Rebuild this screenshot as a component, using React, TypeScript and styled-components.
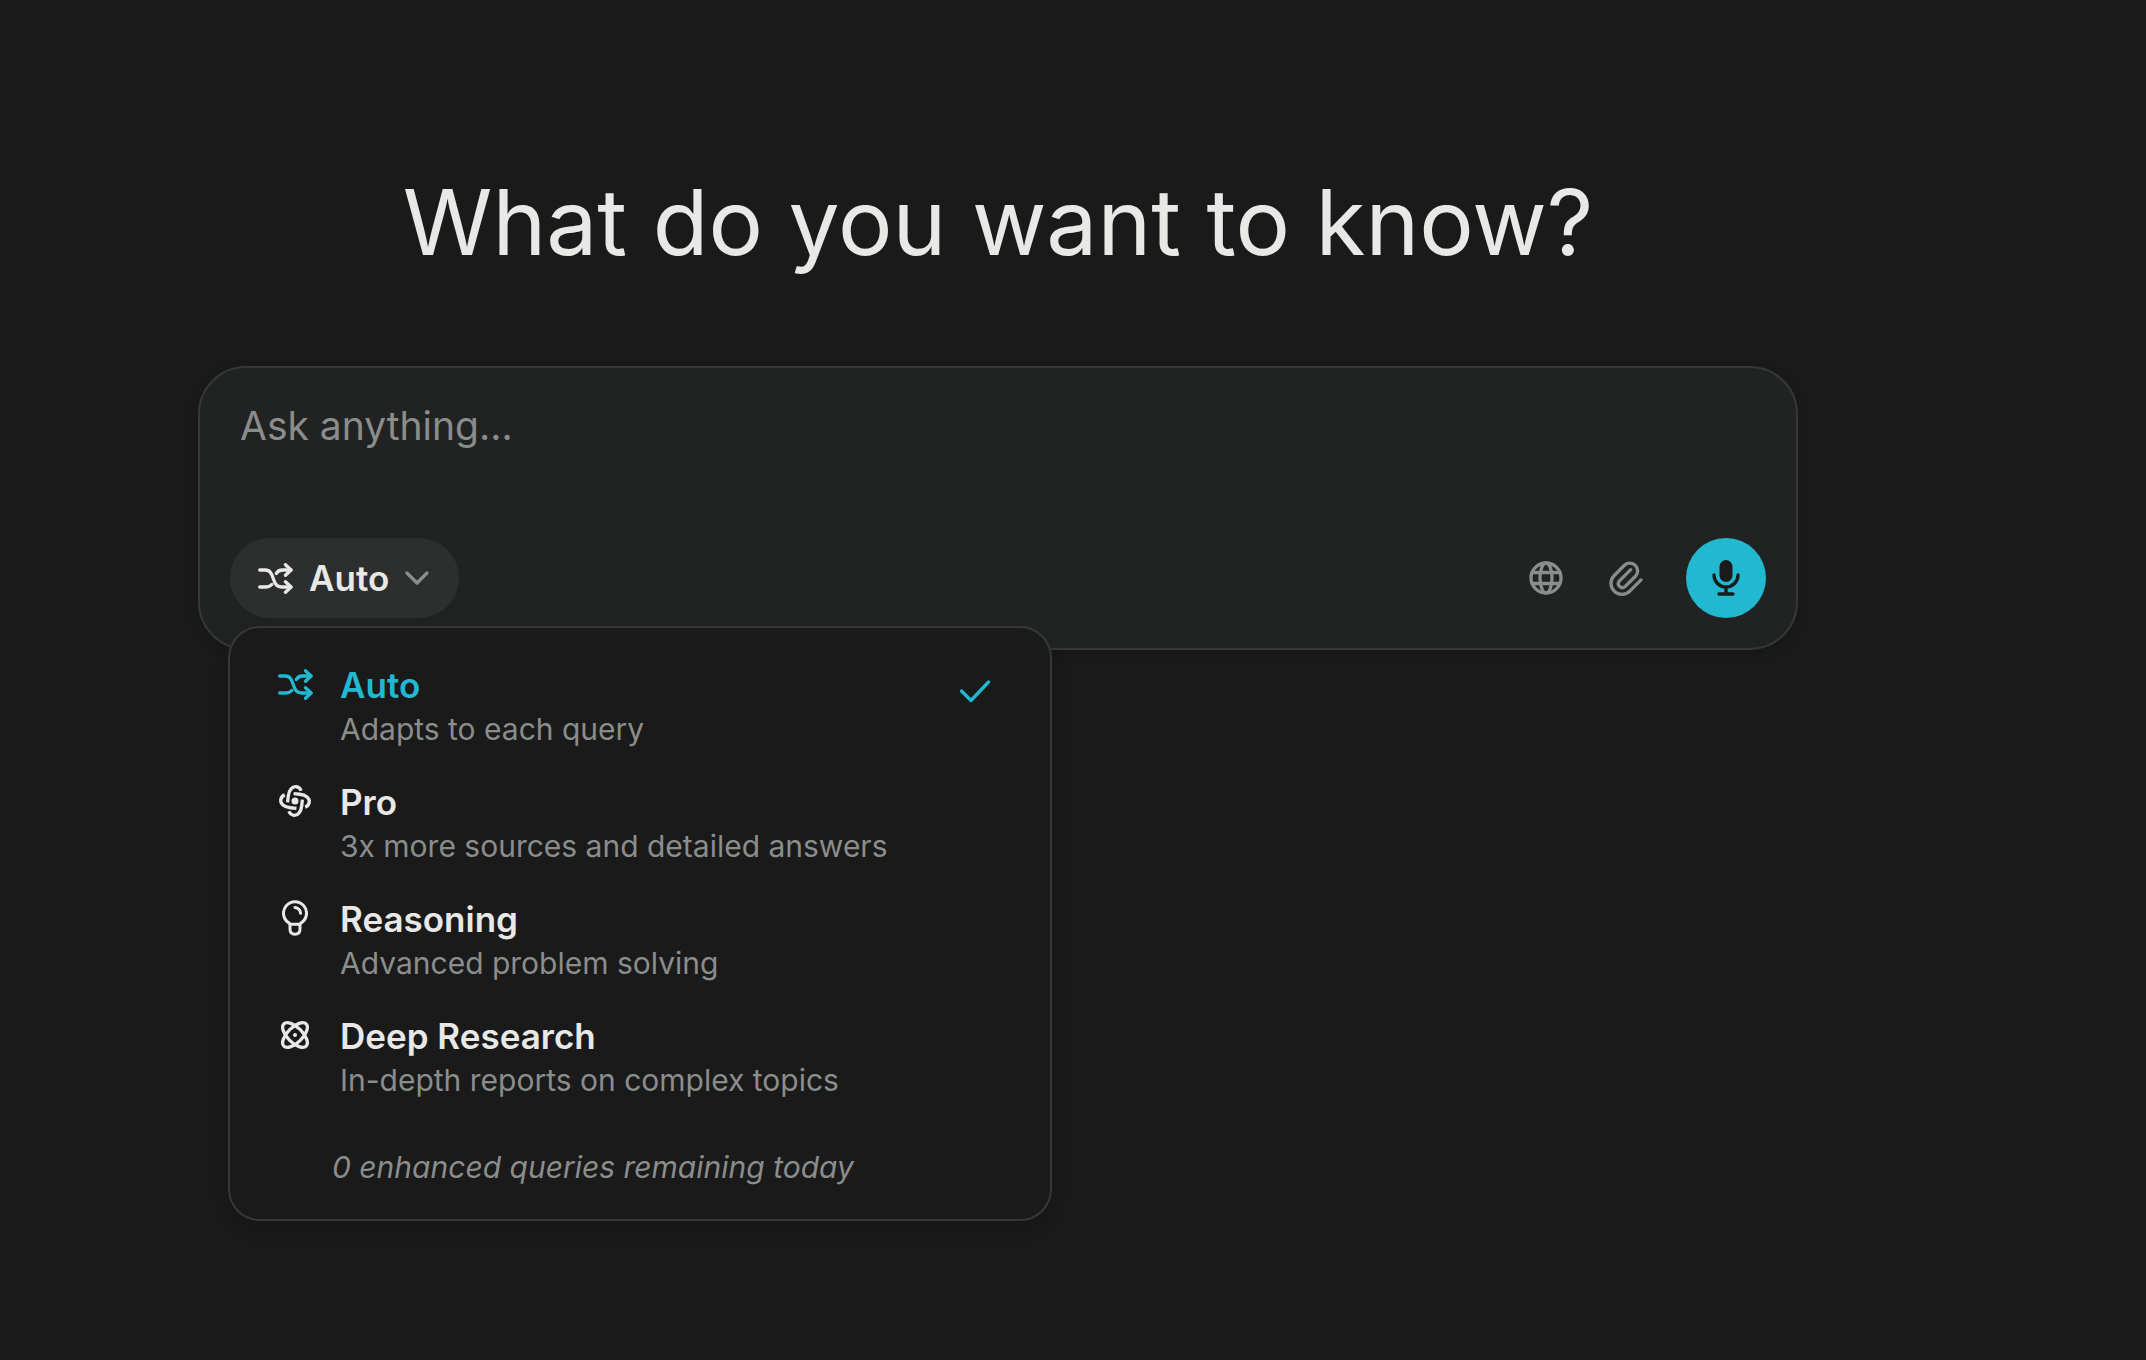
import React, { useState } from "react";
import styled, { createGlobalStyle } from "styled-components";

const color = {
  page: "#1a1a1a",
  composer: "#212322",
  pill: "#2d2f2e",
  border: "#363837",
  text: "#e8e8e6",
  muted: "#8b8d8c",
  accent: "#22b8cf",
};

const GlobalStyle = createGlobalStyle`
  *, *::before, *::after { box-sizing: border-box; }
  body {
    margin: 0;
    background: ${color.page};
    color: ${color.text};
    font-family: Inter, "Liberation Sans", sans-serif;
  }
  button, textarea { font: inherit; color: inherit; }
`;

const Page = styled.main`
  min-height: 100vh;
  padding: 158px 150px 0 0;
`;

const Column = styled.div`
  display: flex;
  flex-direction: column;
  gap: 80px;
  width: 100%;
  max-width: 1600px;
  margin: 0 auto;
`;

const Title = styled.h1`
  margin: 0;
  font-size: 91px;
  line-height: 128px;
  font-weight: 400;
  text-align: center;
`;

const Composer = styled.form`
  display: flex;
  flex-direction: column;
  padding: 30px;
  border: 2px solid ${color.border};
  border-radius: 48px;
  background: ${color.composer};
  box-shadow: 0 4px 12px rgba(0, 0, 0, 0.16);
`;

const Prompt = styled.textarea`
  display: block;
  width: 100%;
  height: 140px;
  padding: 0 10px;
  border: 0;
  outline: 0;
  resize: none;
  background: transparent;
  font-size: 39px;
  line-height: 56px;
  &::placeholder { color: ${color.muted}; opacity: 1; }
`;

const Toolbar = styled.div`
  display: flex;
  justify-content: space-between;
  align-items: center;
`;

const Picker = styled.div`
  position: relative;
`;

const ModeButton = styled.button`
  display: flex;
  align-items: center;
  gap: 16px;
  height: 80px;
  padding: 0 30px 0 28px;
  border: 0;
  border-radius: 40px;
  background: ${color.pill};
  font-size: 35px;
  font-weight: 600;
  cursor: pointer;
`;

const Tools = styled.div`
  display: flex;
`;

const IconButton = styled.button<{ $primary?: boolean }>`
  display: grid;
  place-items: center;
  width: 80px;
  height: 80px;
  margin-left: ${(p) => (p.$primary ? "20px" : "0")};
  padding: 0;
  border: 0;
  border-radius: 50%;
  background: ${(p) => (p.$primary ? color.accent : "transparent")};
  color: ${(p) => (p.$primary ? color.page : color.muted)};
  cursor: pointer;
`;

const Menu = styled.div`
  position: absolute;
  z-index: 1;
  top: calc(100% + 8px);
  left: -2px;
  width: 824px;
  padding: 31px 28px 28px;
  border: 2px solid ${color.border};
  border-radius: 32px;
  background: ${color.page};
  box-shadow: 0 8px 16px rgba(0, 0, 0, 0.16);
`;

const Option = styled.button<{ $active: boolean }>`
  display: grid;
  grid-template-columns: 62px 1fr 64px;
  width: 100%;
  height: 117px;
  padding: 0 0 0 20px;
  border: 0;
  background: transparent;
  text-align: left;
  color: ${(p) => (p.$active ? color.accent : color.text)};
  cursor: pointer;
`;

const OptionIcon = styled.span`
  display: grid;
  place-items: center;
  width: 34px;
  height: 50px;
`;

const CheckMark = styled(OptionIcon)`
  height: 64px;
`;

const OptionText = styled.span`
  display: flex;
  flex-direction: column;
`;

const OptionName = styled.span`
  font-size: 35px;
  line-height: 52px;
  font-weight: 600;
`;

const OptionHint = styled.span`
  font-size: 30px;
  line-height: 36px;
  color: ${color.muted};
`;

const Note = styled.p`
  margin: 16px 0 0;
  padding-left: 74px;
  font-size: 30px;
  line-height: 48px;
  font-style: italic;
  color: ${color.muted};
`;

type IconProps = { w: number; h: number; box?: string; stroke?: number; children: React.ReactNode };

const Icon = ({ w, h, box, stroke = 3.3, children }: IconProps) => (
  <svg
    width={w}
    height={h}
    viewBox={box ?? `0 0 ${w} ${h}`}
    fill="none"
    stroke="currentColor"
    strokeWidth={stroke}
    strokeLinecap="round"
    strokeLinejoin="round"
    aria-hidden="true"
  >
    {children}
  </svg>
);

const ShuffleIcon = () => (
  <Icon w={35} h={31}>
    <path d="M1.7 7H7C18 7 12.5 24 23.5 24H33" />
    <path d="M1.7 24H7C10 24 12.3 23.3 13.8 21.5" />
    <path d="M18.3 10.5C19.5 8.2 21.5 7 24.5 7H33" />
    <path d="M27.5 1.7L33 7L27.5 12.3M27.500 18.700L33 24L27.500 29.300" />
  </Icon>
);

const arm = "M-7.2 2.2V-4C-7.2 -10.5 -4 -14.3 -0.5 -14.3C1.8 -14.3 3.8 -13.2 5 -10.8";

const SwirlIcon = () => (
  <Icon w={34} h={34} box="-17 -17 34 34">
    {[0, 90, 180, 270].map((turn) => (
      <path key={turn} d={arm} strokeLinecap="butt" transform={`rotate(${turn + 6})`} />
    ))}
    <circle r="3.5" fill="currentColor" stroke="none" />
  </Icon>
);

const BulbIcon = () => (
  <Icon w={26} h={36} stroke={3}>
    <path d="M7.5 23.3A11.5 11.5 0 1 1 18.5 23.3L18 24.300H8Z" />
    <path d="M8 24.300V29C8 32.500 10 34.300 13 34.300S18 32.500 18 29V24.300" />
    <path d="M13 7.500C16.200 7.900 18.200 10 18.600 13.200" />
  </Icon>
);

const AtomIcon = () => (
  <Icon w={30} h={30} box="-15 -15 30 30">
    <ellipse rx="15.8" ry="7.5" transform="rotate(45)" />
    <ellipse rx="15.8" ry="7.5" transform="rotate(-45)" />
    <circle r="2" fill="currentColor" stroke="none" />
  </Icon>
);

const GlobeIcon = () => (
  <Icon w={34} h={34}>
    <circle cx="17" cy="17" r="15" />
    <ellipse cx="17" cy="17" rx="6" ry="15" />
    <path d="M3 11.500H31M3 22.500H31" />
  </Icon>
);

const ClipIcon = () => (
  <Icon w={34} h={35}>
    <path d="M32 18.900L20.800 30.100A11 11 0 0 1 5.200 14.500L15.700 4A7.800 7.800 0 0 1 26.700 15L15.800 25.800A4 4 0 0 1 10.200 20.200L21.700 8.700" />
  </Icon>
);

const MicIcon = () => (
  <Icon w={28} h={36}>
    <rect x="7.500" y="0" width="13" height="22" rx="6.500" fill="currentColor" stroke="none" />
    <path d="M2 15A12 12 0 0 0 26 15M14 27.500V33.500M7 34H21" />
  </Icon>
);

const ChevronIcon = () => (
  <Icon w={24} h={16}>
    <path d="M2 3L12 13L22 3" stroke={color.muted} />
  </Icon>
);

const CheckIcon = () => (
  <Icon w={32} h={24}>
    <path d="M2.500 12L12 21.500L29.500 3" />
  </Icon>
);

const modes = [
  { name: "Auto", hint: "Adapts to each query", Glyph: ShuffleIcon },
  { name: "Pro", hint: "3x more sources and detailed answers", Glyph: SwirlIcon },
  { name: "Reasoning", hint: "Advanced problem solving", Glyph: BulbIcon },
  { name: "Deep Research", hint: "In-depth reports on complex topics", Glyph: AtomIcon },
];

export default function App() {
  const [selected, setSelected] = useState(0);
  const [open, setOpen] = useState(true);
  const current = modes[selected];

  return (
    <>
      <GlobalStyle />
      <Page>
        <Column>
          <Title>What do you want to know?</Title>
          <Composer onSubmit={(e) => e.preventDefault()}>
            <Prompt aria-label="Ask anything" placeholder="Ask anything…" />
            <Toolbar>
              <Picker>
                <ModeButton
                  type="button"
                  aria-haspopup="menu"
                  aria-expanded={open}
                  onClick={() => setOpen(!open)}
                >
                  <current.Glyph />
                  {current.name}
                  <ChevronIcon />
                </ModeButton>
                {open && (
                  <Menu role="menu" aria-label="Search mode">
                    {modes.map(({ name, hint, Glyph }, i) => (
                      <Option
                        key={name}
                        type="button"
                        role="menuitemradio"
                        aria-checked={i === selected}
                        $active={i === selected}
                        onClick={() => setSelected(i)}
                      >
                        <OptionIcon>
                          <Glyph />
                        </OptionIcon>
                        <OptionText>
                          <OptionName>{name}</OptionName>
                          <OptionHint>{hint}</OptionHint>
                        </OptionText>
                        {i === selected && (
                          <CheckMark>
                            <CheckIcon />
                          </CheckMark>
                        )}
                      </Option>
                    ))}
                    <Note>0 enhanced queries remaining today</Note>
                  </Menu>
                )}
              </Picker>
              <Tools>
                <IconButton type="button" aria-label="Choose sources">
                  <GlobeIcon />
                </IconButton>
                <IconButton type="button" aria-label="Attach a file">
                  <ClipIcon />
                </IconButton>
                <IconButton type="button" aria-label="Dictate" $primary>
                  <MicIcon />
                </IconButton>
              </Tools>
            </Toolbar>
          </Composer>
        </Column>
      </Page>
    </>
  );
}
